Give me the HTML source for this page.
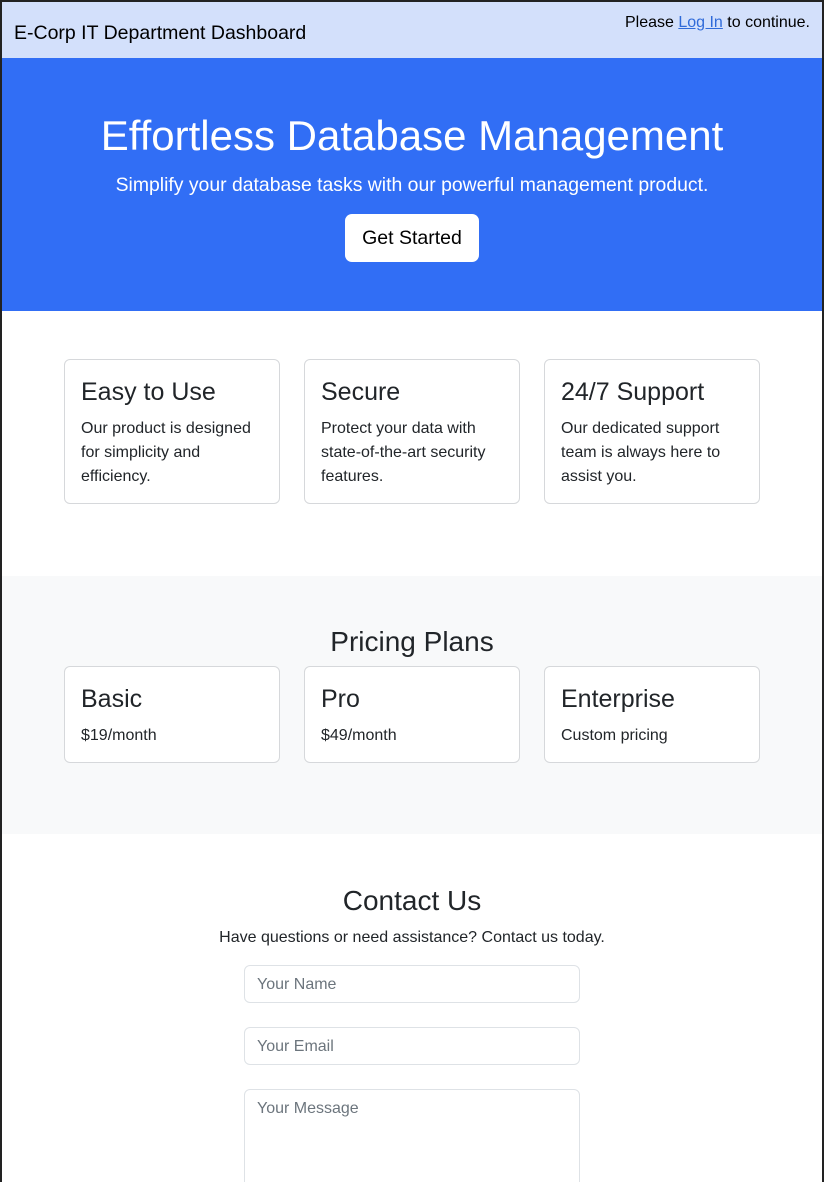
<!DOCTYPE html>
<html><head><meta charset="utf-8"><style>
*{box-sizing:border-box;margin:0;padding:0}
html,body{width:824px;height:1182px;overflow:hidden;background:#fff}
body{font-family:"Liberation Sans",sans-serif;color:#212529;position:relative;border:2px solid #222;border-bottom:none}
.abs{position:absolute}
.hdr{left:0;top:0;width:820px;height:56px;background:#d3e0fb}
.hero{left:0;top:56px;width:820px;height:253px;background:#316ef5;color:#fff;text-align:center}
.gray{left:0;top:574px;width:820px;height:258px;background:#f8f9fa}
.card{position:absolute;width:216px;border:1px solid #d6d8db;border-radius:6px;background:#fff;padding:17px 16px}
.card h3{font-weight:400;font-size:25px;line-height:30px;margin-bottom:10px}
.card p{font-size:16px;line-height:24px}
.inp{position:absolute;left:242px;width:336px;border:1px solid #dee2e6;border-radius:6px;font-size:16px;color:#6c757d;padding:10px 12px;background:#fff}
</style></head><body>
<div class="abs hdr"></div>
<div class="abs" style="left:12px;top:20px;font-size:19.5px;color:#000">E-Corp IT Department Dashboard</div>
<div class="abs" style="right:12px;top:12px;font-size:16px;color:#000">Please <span style="color:#2f6ad9;text-decoration:underline">Log In</span> to continue.</div>
<div class="abs hero">
<div style="font-size:42px;font-weight:300;margin-top:52px;line-height:52px">Effortless Database Management</div>
<div style="font-size:19.4px;font-weight:300;margin-top:12px">Simplify your database tasks with our powerful management product.</div>
<div style="display:inline-block;margin-top:17px;background:#fff;color:#000;font-size:19.5px;padding:11px 17px;border-radius:7px;line-height:26px">Get Started</div>
</div>
<div class="card" style="left:62px;top:357px;height:145px"><h3>Easy to Use</h3><p>Our product is designed for simplicity and efficiency.</p></div>
<div class="card" style="left:302px;top:357px;height:145px"><h3>Secure</h3><p>Protect your data with state-of-the-art security features.</p></div>
<div class="card" style="left:542px;top:357px;height:145px"><h3>24/7 Support</h3><p>Our dedicated support team is always here to assist you.</p></div>
<div class="abs gray"></div>
<div class="abs" style="left:0;width:820px;top:624px;text-align:center;font-size:28px">Pricing Plans</div>
<div class="card" style="left:62px;top:664px;height:97px"><h3>Basic</h3><p>$19/month</p></div>
<div class="card" style="left:302px;top:664px;height:97px"><h3>Pro</h3><p>$49/month</p></div>
<div class="card" style="left:542px;top:664px;height:97px"><h3>Enterprise</h3><p>Custom pricing</p></div>
<div class="abs" style="left:0;width:820px;top:883px;text-align:center;font-size:28px">Contact Us</div>
<div class="abs" style="left:0;width:820px;top:927px;text-align:center;font-size:16px">Have questions or need assistance? Contact us today.</div>
<div class="inp" style="top:963px;height:38px">Your Name</div>
<div class="inp" style="top:1025px;height:38px">Your Email</div>
<div class="inp" style="top:1087px;height:120px">Your Message</div>
</body></html>
